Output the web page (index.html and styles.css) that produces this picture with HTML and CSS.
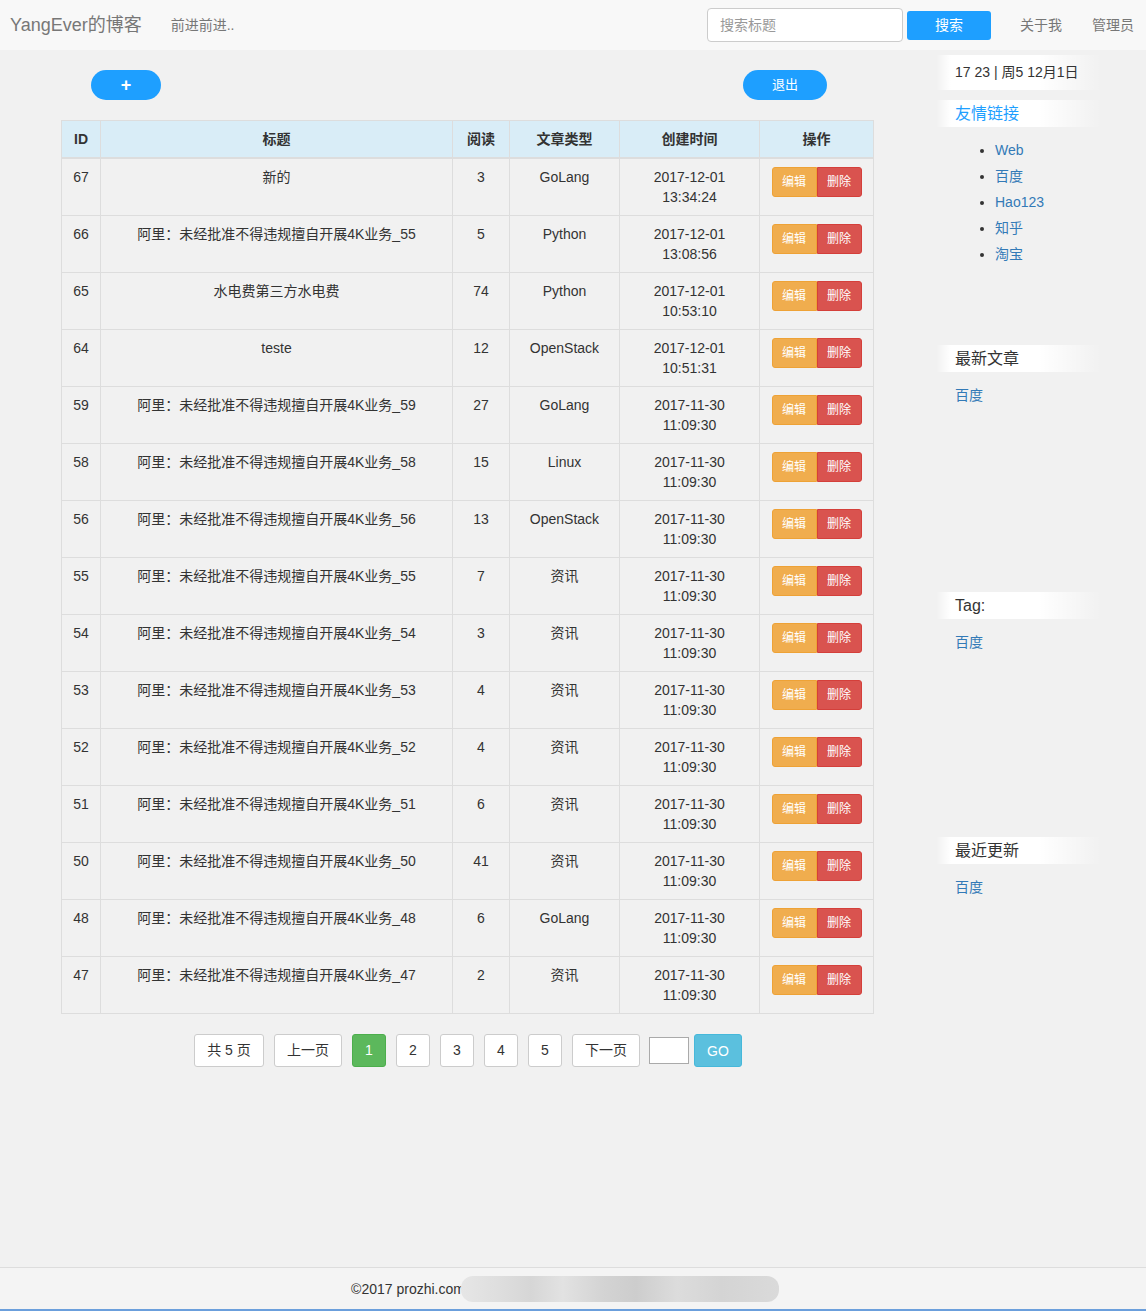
FILE: index.html
```html
<!DOCTYPE html>
<html lang="zh-CN">
<head>
<meta charset="utf-8">
<title>YangEver的博客</title>
<link rel="stylesheet" href="styles.css">
</head>
<body>
<header class="navbar">
  <a class="brand">YangEver的博客</a>
  <span class="motto">前进前进..</span>
  <form class="search">
    <input class="search-input" type="text" placeholder="搜索标题">
    <button class="search-btn" type="button">搜索</button>
  </form>
  <a class="nav-link first">关于我</a>
  <a class="nav-link">管理员</a>
</header>

<div class="page">
  <main class="content">
    <div class="toolbar">
      <button class="pill add" type="button">+</button>
      <button class="pill logout" type="button">退出</button>
    </div>

    <table class="grid">
      <colgroup>
        <col class="c-id"><col class="c-title"><col class="c-read"><col class="c-type"><col class="c-time"><col class="c-op">
      </colgroup>
      <thead>
        <tr><th>ID</th><th>标题</th><th>阅读</th><th>文章类型</th><th>创建时间</th><th>操作</th></tr>
      </thead>
      <tbody>
        <tr><td>67</td><td>新的</td><td>3</td><td>GoLang</td><td>2017-12-01<br>13:34:24</td><td><span class="ops"><a class="op edit">编辑</a><a class="op del">删除</a></span></td></tr>
        <tr><td>66</td><td>阿里：未经批准不得违规擅自开展4K业务_55</td><td>5</td><td>Python</td><td>2017-12-01<br>13:08:56</td><td><span class="ops"><a class="op edit">编辑</a><a class="op del">删除</a></span></td></tr>
        <tr><td>65</td><td>水电费第三方水电费</td><td>74</td><td>Python</td><td>2017-12-01<br>10:53:10</td><td><span class="ops"><a class="op edit">编辑</a><a class="op del">删除</a></span></td></tr>
        <tr><td>64</td><td>teste</td><td>12</td><td>OpenStack</td><td>2017-12-01<br>10:51:31</td><td><span class="ops"><a class="op edit">编辑</a><a class="op del">删除</a></span></td></tr>
        <tr><td>59</td><td>阿里：未经批准不得违规擅自开展4K业务_59</td><td>27</td><td>GoLang</td><td>2017-11-30<br>11:09:30</td><td><span class="ops"><a class="op edit">编辑</a><a class="op del">删除</a></span></td></tr>
        <tr><td>58</td><td>阿里：未经批准不得违规擅自开展4K业务_58</td><td>15</td><td>Linux</td><td>2017-11-30<br>11:09:30</td><td><span class="ops"><a class="op edit">编辑</a><a class="op del">删除</a></span></td></tr>
        <tr><td>56</td><td>阿里：未经批准不得违规擅自开展4K业务_56</td><td>13</td><td>OpenStack</td><td>2017-11-30<br>11:09:30</td><td><span class="ops"><a class="op edit">编辑</a><a class="op del">删除</a></span></td></tr>
        <tr><td>55</td><td>阿里：未经批准不得违规擅自开展4K业务_55</td><td>7</td><td>资讯</td><td>2017-11-30<br>11:09:30</td><td><span class="ops"><a class="op edit">编辑</a><a class="op del">删除</a></span></td></tr>
        <tr><td>54</td><td>阿里：未经批准不得违规擅自开展4K业务_54</td><td>3</td><td>资讯</td><td>2017-11-30<br>11:09:30</td><td><span class="ops"><a class="op edit">编辑</a><a class="op del">删除</a></span></td></tr>
        <tr><td>53</td><td>阿里：未经批准不得违规擅自开展4K业务_53</td><td>4</td><td>资讯</td><td>2017-11-30<br>11:09:30</td><td><span class="ops"><a class="op edit">编辑</a><a class="op del">删除</a></span></td></tr>
        <tr><td>52</td><td>阿里：未经批准不得违规擅自开展4K业务_52</td><td>4</td><td>资讯</td><td>2017-11-30<br>11:09:30</td><td><span class="ops"><a class="op edit">编辑</a><a class="op del">删除</a></span></td></tr>
        <tr><td>51</td><td>阿里：未经批准不得违规擅自开展4K业务_51</td><td>6</td><td>资讯</td><td>2017-11-30<br>11:09:30</td><td><span class="ops"><a class="op edit">编辑</a><a class="op del">删除</a></span></td></tr>
        <tr><td>50</td><td>阿里：未经批准不得违规擅自开展4K业务_50</td><td>41</td><td>资讯</td><td>2017-11-30<br>11:09:30</td><td><span class="ops"><a class="op edit">编辑</a><a class="op del">删除</a></span></td></tr>
        <tr><td>48</td><td>阿里：未经批准不得违规擅自开展4K业务_48</td><td>6</td><td>GoLang</td><td>2017-11-30<br>11:09:30</td><td><span class="ops"><a class="op edit">编辑</a><a class="op del">删除</a></span></td></tr>
        <tr><td>47</td><td>阿里：未经批准不得违规擅自开展4K业务_47</td><td>2</td><td>资讯</td><td>2017-11-30<br>11:09:30</td><td><span class="ops"><a class="op edit">编辑</a><a class="op del">删除</a></span></td></tr>
      </tbody>
    </table>

    <nav class="pager">
      <span class="pg wide-total">共 5 页</span>
      <a class="pg wide">上一页</a>
      <a class="pg num active">1</a>
      <a class="pg num">2</a>
      <a class="pg num">3</a>
      <a class="pg num">4</a>
      <a class="pg num">5</a>
      <a class="pg wide">下一页</a>
      <input class="pg-input" type="text">
      <button class="pg-go" type="button">GO</button>
    </nav>
  </main>

  <aside class="sidebar">
    <div class="date-box">17 23 | 周5 12月1日</div>

    <section class="side-section first">
      <div class="side-title blue">友情链接</div>
      <ul class="link-list">
        <li><a>Web</a></li>
        <li><a>百度</a></li>
        <li><a>Hao123</a></li>
        <li><a>知乎</a></li>
        <li><a>淘宝</a></li>
      </ul>
    </section>

    <section class="side-section tall">
      <div class="side-title">最新文章</div>
      <a class="side-item">百度</a>
    </section>

    <section class="side-section">
      <div class="side-title">Tag:</div>
      <a class="side-item">百度</a>
    </section>

    <section class="side-section">
      <div class="side-title">最近更新</div>
      <a class="side-item">百度</a>
    </section>
  </aside>
</div>

<footer class="footer">
  <span class="copy">©2017 prozhi.com</span><span class="blurred"></span>
</footer>
</body>
</html>
```

FILE: styles.css
```css
html, body {
  margin: 0;
  padding: 0;
}

body {
  background: #f1f1f1;
  font-family: "Liberation Sans", "Noto Sans CJK SC", sans-serif;
  font-size: 14px;
  color: #333;
  min-height: 100vh;
  display: flex;
  flex-direction: column;
}

a {
  text-decoration: none;
  cursor: pointer;
}

/* ---------- navbar ---------- */
.navbar {
  height: 50px;
  flex: 0 0 50px;
  background: #f8f8f8;
  display: flex;
  align-items: center;
  padding: 0 12px 0 10px;
}

.brand {
  font-size: 18px;
  line-height: 20px;
  color: #777;
}

.motto {
  margin-left: 29px;
  font-size: 14px;
  line-height: 20px;
  color: #777;
}

.search {
  margin: 0 0 0 auto;
  display: flex;
  align-items: center;
}

.search-input {
  box-sizing: border-box;
  width: 196px;
  height: 34px;
  margin: 0;
  padding: 0 12px;
  border: 1px solid #ccc;
  border-radius: 4px;
  background: #fff;
  font-family: inherit;
  font-size: 14px;
  color: #555;
  outline: none;
}

.search-input::placeholder {
  color: #999;
}

.search-btn {
  box-sizing: border-box;
  width: 84px;
  height: 29px;
  margin-left: 4px;
  border: 0;
  border-radius: 3px;
  background: #1e9fff;
  color: #fff;
  font-family: inherit;
  font-size: 14px;
  padding: 0;
  line-height: 29px;
}

.nav-link {
  margin-left: 30px;
  font-size: 14px;
  line-height: 20px;
  color: #777;
}

.nav-link.first {
  margin-left: 29px;
}

/* ---------- main ---------- */
.page {
  flex: 1;
  display: flex;
  align-items: flex-start;
}

.content {
  margin-left: 61px;
  width: 812px;
  padding-top: 20px;
}

.toolbar {
  display: flex;
  justify-content: space-between;
  padding: 0 46px 0 30px;
}

.pill {
  height: 30px;
  border: 0;
  border-radius: 15px;
  background: #1e9fff;
  color: #fff;
  font-family: inherit;
  font-size: 13px;
  line-height: 28px;
  padding: 0;
}

.pill.add {
  width: 70px;
  font-size: 18px;
  font-weight: bold;
  line-height: 30px;
}

.pill.logout {
  width: 84px;
}

/* ---------- table ---------- */
.grid {
  margin-top: 20px;
  width: 812px;
  border-collapse: collapse;
  table-layout: fixed;
}

.c-id { width: 39px; }
.c-title { width: 352px; }
.c-read { width: 57px; }
.c-type { width: 110px; }
.c-time { width: 140px; }
.c-op { width: 114px; }

.grid th,
.grid td {
  border: 1px solid #ddd;
  padding: 8px;
  line-height: 20px;
  text-align: center;
  vertical-align: top;
  font-size: 14px;
  color: #333;
}

.grid th {
  background: #d9edf7;
  font-weight: bold;
  border-bottom: 2px solid #ddd;
}

.ops {
  display: inline-flex;
  vertical-align: top;
}

.op {
  box-sizing: border-box;
  width: 45px;
  height: 30px;
  line-height: 29px;
  font-size: 12px;
  color: #fff;
  text-align: center;
}

.op.edit {
  background: #f0ad4e;
  border: 1px solid #eea236;
  border-radius: 3px 0 0 3px;
}

.op.del {
  background: #d9534f;
  border: 1px solid #d43f3a;
  border-radius: 0 3px 3px 0;
}

/* ---------- pager ---------- */
.pager {
  margin-top: 20px;
  display: flex;
  justify-content: center;
  align-items: center;
  padding-left: 2px;
}

.pg {
  box-sizing: border-box;
  height: 33px;
  line-height: 31px;
  border: 1px solid #ccc;
  border-radius: 3px;
  background: #fff;
  color: #333;
  font-size: 14px;
  text-align: center;
  margin-right: 10px;
}

.pg.wide-total { width: 70px; }
.pg.wide { width: 68px; }
.pg.num { width: 34px; }

.pg.active {
  background: #5cb85c;
  border-color: #4cae4c;
  color: #fff;
}

.pg-input {
  box-sizing: border-box;
  width: 40px;
  height: 27px;
  margin: 0 5px 0 -1px;
  border: 1px solid #aaa;
  background: #fff;
  padding: 0;
}

.pg-go {
  box-sizing: border-box;
  width: 48px;
  height: 33px;
  border: 1px solid #46b8da;
  border-radius: 3px;
  background: #5bc0de;
  color: #fff;
  font-family: inherit;
  font-size: 14px;
  padding: 0;
}

/* ---------- sidebar ---------- */
.sidebar {
  margin-left: 63px;
  width: 165px;
  padding-top: 5px;
}

.date-box,
.side-title {
  padding-left: 19px;
  background: linear-gradient(to right, rgba(255,255,255,0) 0%, #fff 9%, #fff 62%, rgba(255,255,255,0) 100%);
}

.date-box {
  height: 35px;
  line-height: 35px;
  font-size: 14px;
  color: #333;
}

.side-section {
  height: 245px;
}

.side-section.first {
  margin-top: 10px;
}

.side-section.tall {
  height: 247px;
}

.side-title {
  height: 27px;
  line-height: 27px;
  font-size: 16px;
  color: #333;
}

.side-title.blue {
  color: #1e9fff;
}

.link-list {
  margin: 10px 0 0;
  padding-left: 59px;
  list-style: disc;
}

.link-list li {
  line-height: 26px;
  font-size: 14px;
  color: #333;
}

.link-list a,
.side-item {
  color: #337ab7;
  font-size: 14px;
}

.side-item {
  display: block;
  margin-top: 13px;
  padding-left: 19px;
  line-height: 20px;
}

/* ---------- footer ---------- */
.footer {
  box-sizing: border-box;
  height: 44px;
  flex: 0 0 44px;
  border-top: 1px solid #ddd;
  border-bottom: 2px solid #6b9fdc;
  background: #f4f4f4;
  display: flex;
  align-items: center;
  justify-content: center;
  padding-right: 16px;
}

.copy {
  font-size: 14px;
  color: #333;
  line-height: 20px;
}

.blurred {
  display: inline-block;
  width: 318px;
  height: 26px;
  margin-left: -4px;
  border-radius: 12px;
  background: linear-gradient(to right, #e6e6e6 0%, #dedede 12%, #d6d6d6 22%, #e2e2e2 32%, #d3d3d3 45%, #cdcdcd 55%, #dcdcdc 68%, #d4d4d4 82%, #dadada 100%);
}
```
